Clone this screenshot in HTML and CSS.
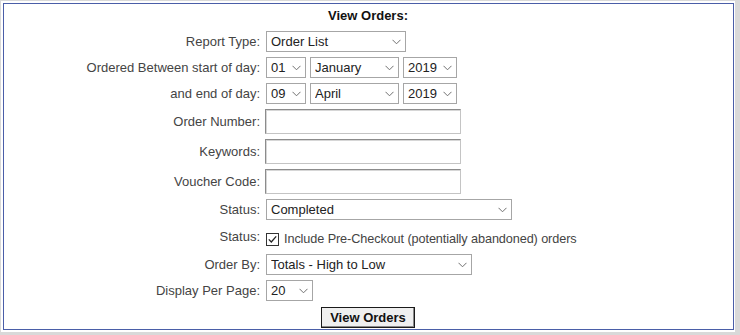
FILE: index.html
```html
<!DOCTYPE html>
<html lang="en">
<head>
    <meta charset="UTF-8">
    <title>View Orders</title>
    <link rel="stylesheet" href="styles.css">
</head>
<body>
    <div class="page">
        <form class="panel">
            <div class="title">View Orders:</div>
            <div class="form-grid">
                <label class="label">Report Type:</label>
                <div class="field">
                    <select class="sel w-report"><option>Order List</option></select>
                </div>

                <label class="label">Ordered Between start of day:</label>
                <div class="field">
                    <select class="sel w-day"><option>01</option></select>
                    <select class="sel w-month"><option>January</option></select>
                    <select class="sel w-year"><option>2019</option></select>
                </div>

                <label class="label">and end of day:</label>
                <div class="field">
                    <select class="sel w-day"><option>09</option></select>
                    <select class="sel w-month"><option>April</option></select>
                    <select class="sel w-year"><option>2019</option></select>
                </div>

                <label class="label">Order Number:</label>
                <div class="field"><input type="text" class="txt"></div>

                <label class="label">Keywords:</label>
                <div class="field"><input type="text" class="txt"></div>

                <label class="label">Voucher Code:</label>
                <div class="field"><input type="text" class="txt"></div>

                <label class="label">Status:</label>
                <div class="field">
                    <select class="sel w-status"><option>Completed</option></select>
                </div>

                <label class="label check-label">Status:</label>
                <div class="field check-field">
                    <input type="checkbox" class="chk" checked>
                    <span class="check-text">Include Pre-Checkout (potentially abandoned) orders</span>
                </div>

                <label class="label">Order By:</label>
                <div class="field">
                    <select class="sel w-order"><option>Totals - High to Low</option></select>
                </div>

                <label class="label">Display Per Page:</label>
                <div class="field">
                    <select class="sel w-per"><option>20</option></select>
                </div>
            </div>
            <div class="actions">
                <button type="button" class="btn">View Orders</button>
            </div>
        </form>
    </div>
</body>
</html>
```

FILE: styles.css
```css
html, body {
    margin: 0;
    padding: 0;
    background: #d9d9d9;
}
body {
    font-family: "Liberation Sans", Arial, sans-serif;
    font-size: 13px;
    color: #444;
}
.page {
    width: 734px;
    height: 331px;
    margin: 1px 0 0 1px;
    padding: 2px 0 0 2px;
    box-sizing: border-box;
    background: #fff;
}
.panel {
    width: 731px;
    height: 327px;
    box-sizing: border-box;
    border: 1px solid #4a5ea8;
    margin: 0;
}
.title {
    text-align: center;
    font-weight: bold;
    color: #111;
    line-height: 16px;
    padding-top: 4px;
    margin-left: -1px;
}
.form-grid {
    display: grid;
    grid-template-columns: 261px auto;
    row-gap: 5px;
    align-items: center;
    margin-top: 7px;
}
.label {
    text-align: right;
    padding-right: 5px;
    line-height: 15px;
}
.field {
    display: flex;
    align-items: center;
    gap: 4px;
}
.sel {
    appearance: none;
    -webkit-appearance: none;
    height: 21px;
    box-sizing: border-box;
    border: 1px solid #a6a6a6;
    border-radius: 0;
    background: #fff url("data:image/svg+xml,%3Csvg xmlns='http://www.w3.org/2000/svg' width='9' height='6'%3E%3Cpath d='M0.5 0.8 L4.5 4.8 L8.5 0.8' fill='none' stroke='%23707070' stroke-width='1'/%3E%3C/svg%3E") no-repeat right 4px center;
    font-family: inherit;
    font-size: 13px;
    color: #222;
    padding: 0 0 0 4px;
    margin: 0 0 0 1px;
}
.field .sel + .sel {
    margin-left: 0;
}
.w-report { width: 140px; }
.w-day { width: 40px; }
.w-month { width: 89px; }
.w-year { width: 54px; }
.w-status { width: 246px; }
.w-order { width: 206px; }
.w-per { width: 47px; }
.txt {
    width: 196px;
    height: 25px;
    box-sizing: border-box;
    margin: 0;
    border: 1px solid #8c8c8c;
    border-right-color: #c4c4c4;
    border-bottom-color: #c4c4c4;
    box-shadow: inset 1px 1px 0 #d6d6d6;
    font-family: inherit;
    font-size: 13px;
    padding: 0 3px;
}
.check-label,
.check-field {
    padding-top: 4px;
    height: 20px;
}
.check-field {
    gap: 5px;
}
.check-text {
    font-size: 12.7px;
    letter-spacing: -0.1px;
}
.chk {
    appearance: none;
    -webkit-appearance: none;
    width: 13px;
    height: 13px;
    margin: 0 0 0 1px;
    border: none;
    background: url("data:image/svg+xml,%3Csvg xmlns='http://www.w3.org/2000/svg' width='13' height='13'%3E%3Crect x='0.5' y='0.5' width='12' height='12' fill='%23fff' stroke='%23333'/%3E%3Cpath d='M2.8 6.4 L5.3 9 L10.2 3.4' fill='none' stroke='%23222' stroke-width='1.3'/%3E%3C/svg%3E") no-repeat;
}
.actions {
    text-align: center;
    margin-top: 6px;
    margin-left: -1px;
}
.btn {
    width: 94px;
    height: 21px;
    box-sizing: border-box;
    border: 1px solid #1a1a1a;
    box-shadow: inset -1px -1px 0 #8a8a8a;
    background: #efefef;
    border-radius: 0;
    font-family: inherit;
    font-size: 13px;
    font-weight: bold;
    color: #111;
    padding: 0;
}
```
